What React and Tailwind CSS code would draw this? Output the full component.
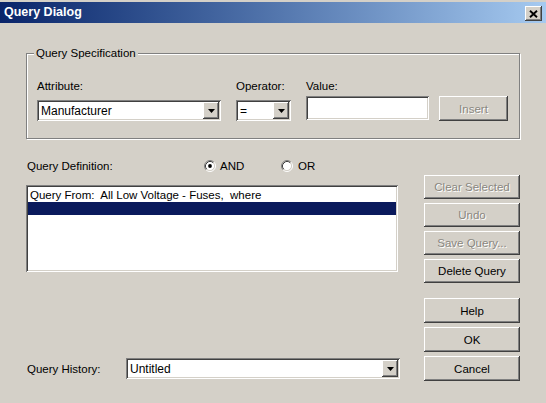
import React from "react";

function Btn({ children, disabled, className = "" }) {
  return (
    <div
      className={`flex items-center justify-center bg-[#d4d0c8] shadow-[inset_-1px_-1px_0_#404040,inset_1px_1px_0_#ffffff,inset_-2px_-2px_0_#808080,inset_2px_2px_0_#d4d0c8] ${
        disabled ? "text-[#8a8780] [text-shadow:1px_1px_0_#ffffff]" : "text-black"
      } ${className}`}
    >
      {children}
    </div>
  );
}

function Arrow() {
  return (
    <div className="flex h-full w-[16px] items-center justify-center bg-[#d4d0c8] shadow-[inset_-1px_-1px_0_#404040,inset_1px_1px_0_#ffffff,inset_-2px_-2px_0_#808080,inset_2px_2px_0_#d4d0c8]">
      <svg width="7" height="4" viewBox="0 0 7 4">
        <path d="M0 0H7L3.5 4Z" fill="#000" />
      </svg>
    </div>
  );
}

function Combo({ value, className = "" }) {
  return (
    <div
      className={`flex items-stretch bg-white p-[2px] shadow-[inset_1px_1px_0_#808080,inset_-1px_-1px_0_#ffffff,inset_2px_2px_0_#404040,inset_-2px_-2px_0_#d4d0c8] ${className}`}
    >
      <div className="flex flex-1 items-center overflow-hidden whitespace-nowrap pl-[2px] text-[12px] leading-[14px] text-black">
        {value}
      </div>
      <Arrow />
    </div>
  );
}

function Radio({ checked }) {
  return (
    <svg width="12" height="12" viewBox="0 0 12 12">
      <circle cx="6" cy="6" r="4.5" fill="#fff" />
      <path d="M2.11 9.89A5.5 5.5 0 0 1 9.89 2.11" stroke="#808080" fill="none" />
      <path d="M9.89 2.11A5.5 5.5 0 0 1 2.11 9.89" stroke="#ffffff" fill="none" />
      <path d="M2.82 9.18A4.5 4.5 0 0 1 9.18 2.82" stroke="#404040" fill="none" />
      <path d="M9.18 2.82A4.5 4.5 0 0 1 2.82 9.18" stroke="#d4d0c8" fill="none" />
      {checked && <circle cx="6" cy="6" r="1.9" fill="#000" />}
    </svg>
  );
}

export default function App() {
  return (
    <div className="h-[403px] w-[546px] overflow-hidden bg-[#d4d0c8] pt-[2px] font-['Liberation_Sans',Arial,sans-serif] text-[11.5px] leading-[14px] text-black">
      {/* Title bar */}
      <div className="flex h-[21px] items-center justify-between bg-gradient-to-r from-[#0a246a] to-[#a6caf0] pl-[4px] pr-[4px]">
        <span className="text-[12.5px] font-bold leading-[15px] text-white">Query Dialog</span>
        <Btn className="mt-[2px] h-[15px] w-[17px]">
          <svg width="9" height="8" viewBox="0 0 9 8">
            <path d="M1 0.8L8 7.2M8 0.8L1 7.2" stroke="#000" strokeWidth="1.9" />
          </svg>
        </Btn>
      </div>

      {/* Query Specification group */}
      <div className="relative ml-[26px] mt-[30px] h-[86px] w-[494px] border border-[#808080] pl-[10px] pt-[25px] shadow-[inset_1px_1px_0_#ffffff,1px_1px_0_#ffffff]">
        <span className="absolute -top-[8px] left-[7px] bg-[#d4d0c8] px-[2px]">Query Specification</span>
        <div className="flex h-[14px]">
          <div className="w-[199px]">Attribute:</div>
          <div className="w-[70px]">Operator:</div>
          <div>Value:</div>
        </div>
        <div className="mt-[3px] flex h-[25px] items-start">
          <Combo value="Manufacturer" className="mt-[4px] h-[21px] w-[184px]" />
          <Combo value="=" className="ml-[15px] mt-[4px] h-[21px] w-[55px]" />
          <div className="ml-[15px] h-[24px] w-[123px] bg-white shadow-[inset_1px_1px_0_#808080,inset_-1px_-1px_0_#ffffff,inset_2px_2px_0_#404040,inset_-2px_-2px_0_#d4d0c8]" />
          <Btn disabled className="ml-[10px] h-[25px] w-[69px]">
            Insert
          </Btn>
        </div>
      </div>

      {/* Lower area */}
      <div className="flex">
        <div className="ml-[26px] w-[374px]">
          <div className="mt-[20px] flex h-[14px] items-center">
            <div className="w-[178px] pl-[1px]">Query Definition:</div>
            <div className="flex w-[77px] items-center">
              <Radio checked />
              <span className="ml-[4px]">AND</span>
            </div>
            <div className="flex items-center">
              <Radio />
              <span className="ml-[5px]">OR</span>
            </div>
          </div>

          <div className="mt-[12px] h-[87px] w-[372px] bg-white p-[2px] shadow-[inset_1px_1px_0_#808080,inset_-1px_-1px_0_#ffffff,inset_2px_2px_0_#404040,inset_-2px_-2px_0_#d4d0c8]">
            <div className="flex h-[15px] items-center whitespace-pre pl-[2px]">
              Query From:  All Low Voltage - Fuses,  where
            </div>
            <div className="h-[13px] bg-[#0a1a5c]" />
          </div>

          <div className="mt-[86px] flex h-[21px] items-center">
            <div className="w-[100px] pl-[1px]">Query History:</div>
            <Combo value="Untitled" className="h-[21px] w-[274px]" />
          </div>
        </div>

        <div className="ml-[24px] mt-[36px] flex w-[96px] flex-col">
          <div className="flex flex-col gap-[4px]">
            <Btn disabled className="h-[24px]">Clear Selected</Btn>
            <Btn disabled className="h-[24px]">Undo</Btn>
            <Btn disabled className="h-[24px]">Save Query...</Btn>
            <Btn className="h-[24px]">Delete Query</Btn>
          </div>
          <div className="mt-[15px] flex flex-col gap-[4px]">
            <Btn className="h-[25px]">Help</Btn>
            <Btn className="h-[25px]">OK</Btn>
            <Btn className="h-[25px]">Cancel</Btn>
          </div>
        </div>
      </div>
    </div>
  );
}
